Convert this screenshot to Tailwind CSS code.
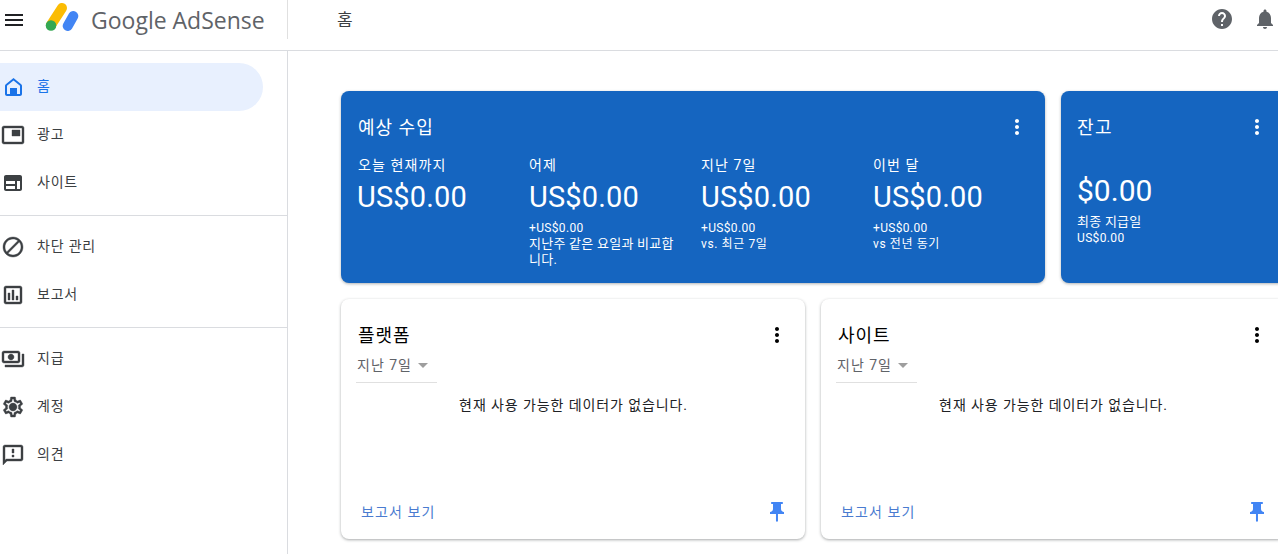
<!DOCTYPE html>
<html lang="ko">
<head>
    <meta charset="UTF-8">
    <title>Google AdSense</title>
    <script src="https://cdn.jsdelivr.net/npm/@tailwindcss/browser@4"></script>
</head>
<body class="bg-white">
<div class="w-[1278px] h-[554px] overflow-hidden flex flex-col font-['Roboto','Noto_Sans_CJK_KR',sans-serif]">

    <!-- Top bar -->
    <header class="h-[51px] shrink-0 border-b border-[#dadce0] flex items-start">
        <div class="w-[288px] h-[39px] shrink-0 border-r border-[#e0e0e0] flex items-center">
            <svg class="w-6 h-6 ml-[2px] text-[#202124]" viewBox="0 0 24 24" fill="currentColor"><path d="M3 18h18v-2H3v2zm0-5h18v-2H3v2zm0-7v2h18V6H3z"/></svg>
            <svg class="w-[36px] h-[39px] ml-[18px]" viewBox="0 0 36 39">
                <line x1="18" y1="8" x2="7" y2="25" stroke="#fbbc04" stroke-width="10" stroke-linecap="round"/>
                <line x1="29.300" y1="16" x2="23.700" y2="26" stroke="#4285f4" stroke-width="10" stroke-linecap="round"/>
                <circle cx="7" cy="25.500" r="5.300" fill="#34a853"/>
            </svg>
            <span class="ml-[11px] mt-[1px] text-[23px] leading-none text-[#5f6368] whitespace-nowrap font-['Open_Sans']">Google AdSense</span>
        </div>
        <h1 class="ml-[49px] mt-[8px] text-[17px] leading-6 text-[#3c4043]">홈</h1>
        <div class="ml-auto flex items-center gap-[19px] mt-[7px] mr-[1px]">
            <svg class="w-6 h-6 text-[#5f6368]" viewBox="0 0 24 24" fill="currentColor"><path d="M12 2C6.48 2 2 6.48 2 12s4.48 10 10 10 10-4.48 10-10S17.52 2 12 2zm1 17h-2v-2h2v2zm2.07-7.75l-.9.92C13.45 12.9 13 13.5 13 15h-2v-.5c0-1.1.45-2.1 1.17-2.83l1.24-1.26c.37-.36.59-.86.59-1.41 0-1.1-.9-2-2-2s-2 .9-2 2H8c0-2.21 1.79-4 4-4s4 1.79 4 4c0 .88-.36 1.68-.93 2.25z"/></svg>
            <svg class="w-6 h-6 text-[#5f6368]" viewBox="0 0 24 24" fill="currentColor"><path d="M12 22c1.1 0 2-.9 2-2h-4c0 1.1.89 2 2 2zm6-6v-5c0-3.07-1.64-5.64-4.5-6.32V4c0-.83-.67-1.5-1.5-1.5s-1.5.67-1.5 1.5v.68C7.63 5.36 6 7.92 6 11v5l-2 2v1h16v-1l-2-2z"/></svg>
        </div>
    </header>

    <div class="flex flex-1 min-h-0">
        <!-- Sidebar -->
        <aside class="w-[288px] shrink-0 border-r border-[#dadce0] pt-3 text-[14px] tracking-[0.8px] text-[#3c4043]">
            <a class="flex items-center gap-3 h-12 w-[263px] pl-[1px] rounded-r-full bg-[#e8f0fe] text-[#1a73e8]">
                <svg class="w-6 h-6" viewBox="0 0 24 24" fill="currentColor" fill-rule="evenodd"><path d="M12.500 3L4.800 9.200c-.5.4-.8 1-.8 1.600V19c0 1.100.9 2 2 2h13c1.100 0 2-.9 2-2v-8.200c0-.6-.3-1.200-.8-1.600L12.500 3zM19 19H6v-8.200l6.500-5.200 6.500 5.200V19zM9 13h7v6H9v-6z"/></svg>
                <span class="pb-[2px]">홈</span>
            </a>
            <a class="flex items-center gap-3 h-12 pl-[1px]">
                <svg class="w-6 h-6" viewBox="0 0 24 24" fill="currentColor" stroke="currentColor" stroke-width="0.4"><path d="M19 7h-8v6h8V7zm2-4H3c-1.1 0-2 .9-2 2v14c0 1.100.9 1.980 2 1.980h18c1.100 0 2-.88 2-1.980V5c0-1.100-.9-2-2-2zm0 16.010H3V4.980h18v14.030z"/></svg>
                <span class="pb-[2px]">광고</span>
            </a>
            <a class="flex items-center gap-3 h-12 pl-[1px]">
                <svg class="w-6 h-6" viewBox="0 0 24 24" fill="currentColor" fill-rule="evenodd"><path d="M5 4h14c1.100 0 2 .9 2 2v12c0 1.100-.9 2-2 2H5c-1.100 0-2-.9-2-2V6c0-1.100.9-2 2-2zM5 10v3h9v-3H5zM5 15v3h9v-3H5zM16 10v8h3v-8h-3z"/></svg>
                <span class="pb-[2px]">사이트</span>
            </a>
            <div class="mt-2 mb-[7px] border-t border-[#dadce0]"></div>
            <a class="flex items-center gap-3 h-12 pl-[1px]">
                <svg class="w-6 h-6" viewBox="0 0 24 24" fill="currentColor" stroke="currentColor" stroke-width="0.4"><path d="M12 2C6.480 2 2 6.480 2 12s4.480 10 10 10 10-4.480 10-10S17.520 2 12 2zM4 12c0-4.420 3.580-8 8-8 1.850 0 3.550.63 4.900 1.690L5.690 16.900C4.630 15.550 4 13.850 4 12zm8 8c-1.850 0-3.550-.63-4.900-1.690L18.310 7.100C19.370 8.450 20 10.150 20 12c0 4.420-3.580 8-8 8z"/></svg>
                <span class="pb-[2px]">차단 관리</span>
            </a>
            <a class="flex items-center gap-3 h-12 pl-[1px]">
                <svg class="w-6 h-6" viewBox="0 0 24 24" fill="currentColor" stroke="currentColor" stroke-width="0.4"><path d="M19 3H5c-1.100 0-2 .9-2 2v14c0 1.100.9 2 2 2h14c1.100 0 2-.9 2-2V5c0-1.100-.9-2-2-2zm0 16H5V5h14v14zM7 10h2v7H7zm4-3h2v10h-2zm4 6h2v4h-2z"/></svg>
                <span class="pb-[2px]">보고서</span>
            </a>
            <div class="mt-2 mb-[7px] border-t border-[#dadce0]"></div>
            <a class="flex items-center gap-3 h-12 pl-[1px]">
                <svg class="w-6 h-6" viewBox="0 0 24 24" fill="currentColor" stroke="currentColor" stroke-width="0.4"><path d="M19 14V6c0-1.100-.9-2-2-2H3c-1.100 0-2 .9-2 2v8c0 1.100.9 2 2 2h14c1.100 0 2-.9 2-2zm-2 0H3V6h14v8zm-7-7c-1.660 0-3 1.340-3 3s1.340 3 3 3 3-1.340 3-3-1.340-3-3-3zm13 0v11c0 1.100-.9 2-2 2H4v-2h17V7h2z"/></svg>
                <span class="pb-[2px]">지급</span>
            </a>
            <a class="flex items-center gap-3 h-12 pl-[1px]">
                <svg class="w-6 h-6" viewBox="0 0 24 24" fill="currentColor" stroke="currentColor" stroke-width="0.4"><path d="M19.430 12.980c.04-.32.07-.64.07-.98 0-.34-.03-.66-.07-.98l2.110-1.650c.19-.15.24-.42.12-.64l-2-3.460c-.09-.16-.26-.25-.44-.25-.06 0-.12.01-.17.03l-2.490 1c-.52-.4-1.080-.73-1.690-.98l-.38-2.650C14.460 2.180 14.250 2 14 2h-4c-.25 0-.46.18-.49.42l-.38 2.650c-.61.25-1.170.59-1.690.98l-2.490-1c-.06-.02-.12-.03-.18-.03-.17 0-.34.09-.43.25l-2 3.460c-.13.22-.07.49.12.64l2.110 1.650c-.04.32-.07.65-.07.98 0 .33.03.66.07.98l-2.110 1.650c-.19.15-.24.42-.12.64l2 3.460c.09.16.26.25.44.25.06 0 .12-.01.17-.03l2.490-1c.52.4 1.080.73 1.690.98l.38 2.650c.03.24.24.42.49.42h4c.25 0 .46-.18.49-.42l.38-2.650c.61-.25 1.170-.59 1.690-.98l2.490 1c.06.02.12.03.18.03.17 0 .34-.09.43-.25l2-3.460c.12-.22.07-.49-.12-.64l-2.110-1.650zm-1.980-1.710c.04.31.05.52.05.73 0 .21-.02.43-.05.73l-.14 1.130.89.7 1.080.84-.7 1.210-1.270-.51-1.040-.42-.9.68c-.43.32-.84.56-1.250.73l-1.060.43-.16 1.130-.2 1.350h-1.400l-.19-1.350-.16-1.130-1.060-.43c-.43-.18-.83-.41-1.230-.71l-.91-.7-1.060.43-1.270.51-.7-1.210 1.080-.84.89-.7-.14-1.130c-.03-.31-.05-.54-.05-.74s.02-.43.05-.73l.14-1.130-.89-.7-1.080-.84.7-1.210 1.270.51 1.040.42.9-.68c.43-.32.84-.56 1.250-.73l1.060-.43.16-1.130.2-1.350h1.390l.19 1.350.16 1.130 1.060.43c.43.18.83.41 1.230.71l.91.7 1.060-.43 1.270-.51.7 1.210-1.070.85-.89.7.14 1.130zM12 8c-2.210 0-4 1.790-4 4s1.790 4 4 4 4-1.790 4-4-1.790-4-4-4z"/></svg>
                <span class="pb-[2px]">계정</span>
            </a>
            <a class="flex items-center gap-3 h-12 pl-[1px]">
                <svg class="w-6 h-6" viewBox="0 0 24 24" fill="currentColor" stroke="currentColor" stroke-width="0.4"><path d="M20 2H4c-1.100 0-1.990.9-1.990 2L2 22l4-4h14c1.100 0 2-.9 2-2V4c0-1.100-.9-2-2-2zm0 14H5.170L4 17.170V4h16v12zm-9-4h2v2h-2zm0-6h2v4h-2z"/></svg>
                <span class="pb-[2px]">의견</span>
            </a>
        </aside>

        <!-- Content -->
        <main class="flex-1 min-w-0 pl-[53px] pt-10 flex flex-col gap-4">
            <div class="flex gap-4">
                <section class="w-[704px] h-[192px] shrink-0 rounded-lg bg-[#1565c0] text-white shadow-[0_1px_3px_rgba(60,64,67,0.4)] pl-4 pr-4 pt-[23px]">
                    <div class="flex items-center justify-between h-[26px]">
                        <h2 class="text-[18px] tracking-[1px] ml-px">예상 수입</h2>
                        <svg class="w-6 h-6" viewBox="0 0 24 24" fill="currentColor"><path d="M12 8c1.100 0 2-.9 2-2s-.9-2-2-2-2 .9-2 2 .9 2 2 2zm0 2c-1.100 0-2 .9-2 2s.9 2 2 2 2-.9 2-2-.9-2-2-2zm0 6c-1.100 0-2 .9-2 2s.9 2 2 2 2-.9 2-2-.9-2-2-2z"/></svg>
                    </div>
                    <div class="grid grid-cols-[172px_172px_172px_172px] mt-[15px]">
                        <div>
                            <p class="text-[14px] leading-5 tracking-[1.1px] ml-px">오늘 현재까지</p>
                            <p class="text-[29px] leading-9 mt-[4px] tracking-[0.15px]">US$0.00</p>
                        </div>
                        <div>
                            <p class="text-[14px] leading-5 tracking-[1.1px]">어제</p>
                            <p class="text-[29px] leading-9 mt-[4px] tracking-[0.15px]">US$0.00</p>
                            <p class="text-[12px] leading-4 mt-[5px] tracking-[0.35px]">+US$0.00<br><span class="text-[13px] tracking-[0.25px]">지난주 같은 요일과 비교합<br>니다.</span></p>
                        </div>
                        <div>
                            <p class="text-[14px] leading-5 tracking-[1.1px]">지난 7일</p>
                            <p class="text-[29px] leading-9 mt-[4px] tracking-[0.15px]">US$0.00</p>
                            <p class="text-[12px] leading-4 mt-[5px] tracking-[0.35px]">+US$0.00<br><span class="tracking-[0.6px]">vs. 최근 7일</span></p>
                        </div>
                        <div>
                            <p class="text-[14px] leading-5 tracking-[1.1px]">이번 달</p>
                            <p class="text-[29px] leading-9 mt-[4px] tracking-[0.15px]">US$0.00</p>
                            <p class="text-[12px] leading-4 mt-[5px] tracking-[0.35px]">+US$0.00<br><span class="tracking-[0.6px]">vs 전년 동기</span></p>
                        </div>
                    </div>
                </section>
                <section class="w-[464px] h-[192px] shrink-0 rounded-lg bg-[#1565c0] text-white shadow-[0_1px_3px_rgba(60,64,67,0.4)] pl-4 pt-[23px]">
                    <div class="flex items-center justify-between h-[26px] w-[192px]">
                        <h2 class="text-[18px] tracking-[1.400px]">잔고</h2>
                        <svg class="w-6 h-6" viewBox="0 0 24 24" fill="currentColor"><path d="M12 8c1.100 0 2-.9 2-2s-.9-2-2-2-2 .9-2 2 .9 2 2 2zm0 2c-1.100 0-2 .9-2 2s.9 2 2 2 2-.9 2-2-.9-2-2-2zm0 6c-1.100 0-2 .9-2 2s.9 2 2 2 2-.9 2-2-.9-2-2-2z"/></svg>
                    </div>
                    <p class="text-[30px] leading-9 mt-[33px]">$0.00</p>
                    <p class="text-[12px] leading-4 mt-[5px] tracking-[0.35px]"><span class="text-[13px] tracking-[0.25px]">최종 지급일</span><br>US$0.00</p>
                </section>
            </div>

            <div class="flex gap-4">
                <section class="w-[464px] h-[240px] shrink-0 rounded-lg bg-white shadow-[0_1px_3px_rgba(60,64,67,0.45)] pl-[17px] pr-4 pt-[23px] flex flex-col">
                    <div class="flex items-center justify-between h-[26px]">
                        <h2 class="text-[18px] tracking-[1px] text-black">플랫폼</h2>
                        <svg class="w-6 h-6 text-black" viewBox="0 0 24 24" fill="currentColor"><path d="M12 8c1.100 0 2-.9 2-2s-.9-2-2-2-2 .9-2 2 .9 2 2 2zm0 2c-1.100 0-2 .9-2 2s.9 2 2 2 2-.9 2-2-.9-2-2-2zm0 6c-1.100 0-2 .9-2 2s.9 2 2 2 2-.9 2-2-.9-2-2-2z"/></svg>
                    </div>
                    <div class="w-[81px] h-[31px] ml-[-2px] pl-[1px] pb-[3px] mt-[4px] border-b border-[#e0e0e0] flex items-center text-[14px] tracking-[1px] text-[#5f6368]">
                        <span>지난 7일</span>
                        <span class="ml-[6px] w-0 h-0 border-x-[5px] border-x-transparent border-t-[5px] border-t-[#9e9e9e]"></span>
                    </div>
                    <p class="mt-[12px] text-center text-[14px] leading-5 tracking-[0.9px] text-[#202124]">현재 사용 가능한 데이터가 없습니다.</p>
                    <div class="mt-auto mb-[15px] flex items-center justify-between pl-[3px]">
                        <a class="text-[14px] tracking-[1.1px] text-[#4a7bd0]">보고서 보기</a>
                        <svg class="w-6 h-6 text-[#4285f4]" viewBox="0 0 24 24" fill="currentColor"><path d="M16 9V4h1c.55 0 1-.45 1-1s-.45-1-1-1H7c-.55 0-1 .45-1 1s.45 1 1 1h1v5c0 1.660-1.340 3-3 3v2h5.970v7l1 1 1-1v-7H19v-2c-1.660 0-3-1.340-3-3z"/></svg>
                    </div>
                </section>
                <section class="w-[464px] h-[240px] shrink-0 rounded-lg bg-white shadow-[0_1px_3px_rgba(60,64,67,0.45)] pl-[17px] pr-4 pt-[23px] flex flex-col">
                    <div class="flex items-center justify-between h-[26px] w-[431px]">
                        <h2 class="text-[18px] tracking-[1px] text-black">사이트</h2>
                        <svg class="w-6 h-6 text-black" viewBox="0 0 24 24" fill="currentColor"><path d="M12 8c1.100 0 2-.9 2-2s-.9-2-2-2-2 .9-2 2 .9 2 2 2zm0 2c-1.100 0-2 .9-2 2s.9 2 2 2 2-.9 2-2-.9-2-2-2zm0 6c-1.100 0-2 .9-2 2s.9 2 2 2 2-.9 2-2-.9-2-2-2z"/></svg>
                    </div>
                    <div class="w-[81px] h-[31px] ml-[-2px] pl-[1px] pb-[3px] mt-[4px] border-b border-[#e0e0e0] flex items-center text-[14px] tracking-[1px] text-[#5f6368]">
                        <span>지난 7일</span>
                        <span class="ml-[6px] w-0 h-0 border-x-[5px] border-x-transparent border-t-[5px] border-t-[#9e9e9e]"></span>
                    </div>
                    <p class="mt-[12px] text-center text-[14px] leading-5 tracking-[0.9px] text-[#202124]">현재 사용 가능한 데이터가 없습니다.</p>
                    <div class="mt-auto mb-[15px] flex items-center justify-between pl-[3px] w-[431px]">
                        <a class="text-[14px] tracking-[1.1px] text-[#4a7bd0]">보고서 보기</a>
                        <svg class="w-6 h-6 text-[#4285f4]" viewBox="0 0 24 24" fill="currentColor"><path d="M16 9V4h1c.55 0 1-.45 1-1s-.45-1-1-1H7c-.55 0-1 .45-1 1s.45 1 1 1h1v5c0 1.660-1.340 3-3 3v2h5.970v7l1 1 1-1v-7H19v-2c-1.660 0-3-1.340-3-3z"/></svg>
                    </div>
                </section>
            </div>
        </main>
    </div>
</div>
</body>
</html>
